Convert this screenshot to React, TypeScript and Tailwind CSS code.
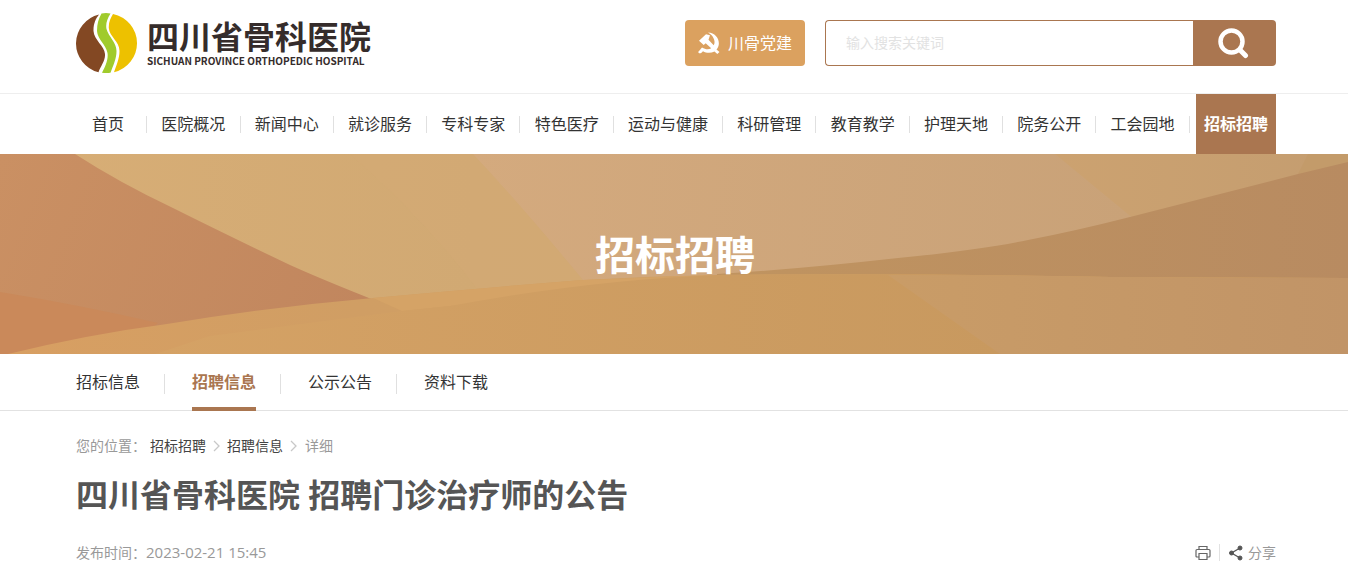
import { Fragment } from "react";

const NAV = [
  "首页", "医院概况", "新闻中心", "就诊服务", "专科专家", "特色医疗", "运动与健康",
  "科研管理", "教育教学", "护理天地", "院务公开", "工会园地", "招标招聘",
];
const TABS = ["招标信息", "招聘信息", "公示公告", "资料下载"];

function LogoMark() {
  return (
    <svg className="h-[60px] w-[61px] shrink-0" viewBox="0 0 61 60" aria-hidden="true">
      <path fill="#834823" d="M23 1.500A30.500 30 0 0 0 0 30A30.500 30 0 0 0 22.500 59.300C24.500 53 29.500 48 29 41C28.500 33 18 27 17.500 18C17.300 11 19.500 6 23 1.500Z" />
      <path fill="#a0cb2c" d="M25.500 0.400Q30 -0.300 34.500 0.400C31 6 29.500 11 30.500 16C32.500 24 40.500 29 40.500 38C40.500 46 37 53 34.500 59.700Q30.500 60.200 26 59.800C29 54 32.500 47 31.500 40C30 31.500 21.500 26.500 21 18C21 11 22.500 5.500 25.500 0.400Z" />
      <path fill="#edc100" d="M37 1A30.500 30 0 0 1 61 30A30.500 30 0 0 1 38 59.300C40 53 43.500 46 43.500 38C43.500 28 33.500 24 32.800 15C32.500 9.500 34.500 5 37 1Z" />
    </svg>
  );
}

function PartyEmblem() {
  return (
    <svg className="h-[22px] w-[22px]" viewBox="0 0 22 22" aria-hidden="true">
      <path fill="#fff" d="M10 0.500C18 0.500 22.500 8.500 20.300 14.500C19.800 15.700 19.200 16.700 18.500 17.500L21.500 20L19.300 22L16.500 19.500C12.500 21.500 8 21 5 19.200L3.500 20.700Q1.500 22 0.500 20.700Q0 19.500 1.500 18.500L4 15.500C7.500 17.600 10.800 17.700 13.200 16.300L7.700 11.200L5.700 12.900L1 8.800L8 2.300L12 3.200L10.500 7.800L15.700 13.200C18 9.500 15.500 3.500 10 0.500Z" />
    </svg>
  );
}

function BannerArt() {
  return (
    <svg className="absolute inset-0 h-full w-full" viewBox="0 0 1348 200" preserveAspectRatio="none" aria-hidden="true">
      <defs>
        <linearGradient id="sky"><stop offset="0" stopColor="#d8ae76" /><stop offset="0.350" stopColor="#d1a973" /><stop offset="0.450" stopColor="#d0a872" /></linearGradient>
        <linearGradient id="rose" gradientUnits="userSpaceOnUse" x1="470" y1="0" x2="1130" y2="60"><stop offset="0" stopColor="#d4aa7e" /><stop offset="1" stopColor="#c9a278" /></linearGradient>
        <linearGradient id="east" gradientUnits="userSpaceOnUse" x1="1055" y1="0" x2="1348" y2="0"><stop offset="0" stopColor="#cca270" /><stop offset="1" stopColor="#c49d70" /></linearGradient>
        <linearGradient id="clay" gradientUnits="userSpaceOnUse" x1="0" y1="0" x2="373" y2="144"><stop offset="0" stopColor="#ca9063" /><stop offset="1" stopColor="#c1865e" /></linearGradient>
        <linearGradient id="ridge" gradientUnits="userSpaceOnUse" x1="717" y1="0" x2="1348" y2="0"><stop offset="0" stopColor="#c09460" /><stop offset="1" stopColor="#b88b61" /></linearGradient>
        <linearGradient id="hill" gradientUnits="userSpaceOnUse" x1="0" y1="0" x2="600" y2="0"><stop offset="0" stopColor="#d89f62" /><stop offset="0.600" stopColor="#d09e64" /><stop offset="1" stopColor="#d0a064" /></linearGradient>
        <linearGradient id="sand" gradientUnits="userSpaceOnUse" x1="155" y1="0" x2="1000" y2="0"><stop offset="0" stopColor="#d5a265" /><stop offset="1" stopColor="#c8995f" /></linearGradient>
        <linearGradient id="shore" gradientUnits="userSpaceOnUse" x1="898" y1="0" x2="1348" y2="0"><stop offset="0" stopColor="#c99c67" /><stop offset="1" stopColor="#c19467" /></linearGradient>
      </defs>
      <rect width="1348" height="200" fill="url(#sky)" />
      <path fill="#d5aa76" fillOpacity="0.400" d="M350 0H473Q520 50 583 126L478 136Q420 60 350 0Z" />
      <path fill="url(#rose)" d="M473 0H1140V200H640L583 126Q520 50 473 0Z" />
      <path fill="url(#east)" d="M1055 0H1348V70H1140Z" />
      <path fill="#c39b6a" d="M1308 0H1348V30H1293Z" />
      <path fill="url(#clay)" d="M0 0H75Q120 29 173 54Q225 80 290 111Q330 129 402 157V200H0Z" />
      <path fill="#ca895a" d="M0 138Q80 151 158 169L120 200H0Z" />
      <path fill="url(#ridge)" d="M717 120Q800 115 898 104Q980 96 1028 86Q1075 77 1130 63L1298 20L1348 8V126H717Z" />
      <path fill="url(#hill)" d="M8 200Q90 180 167 170Q270 153 373 144Q480 134 583 126Q650 122 717 121Q900 119 1110 123L1348 124V200Z" />
      <path fill="#d5a366" d="M373 144Q480 134 583 126L717 121L450 152L402 157Z" />
      <path fill="url(#sand)" d="M155 200L210 182Q300 170 402 157L450 152Q590 126 717 121Q900 119 1110 123L1348 124V200Z" />
      <path fill="url(#shore)" d="M888 121Q1040 121 1110 123L1348 124V200H1000L898 128Z" />
    </svg>
  );
}

function Chevron() {
  return (
    <svg className="h-3 w-[7px]" viewBox="0 0 7 12" fill="none" stroke="#c8c8c8" strokeWidth="1.300" aria-hidden="true">
      <path d="M1 1L6 6L1 11" />
    </svg>
  );
}

export default function App() {
  return (
    <div className="bg-white font-['Open_Sans','Noto_Sans_CJK_SC',sans-serif] text-[#333]">
      <header className="border-b border-[#eee] pl-1">
        <div className="mx-auto flex h-[93px] max-w-[1200px] items-start justify-between">
          <a href="#" className="mt-[13px] flex gap-2.5" aria-label="四川省骨科医院">
            <LogoMark />
            <span className="flex flex-col whitespace-nowrap font-['Noto_Sans_CJK_SC',sans-serif] font-bold text-[#352c2b]">
              <span className="mt-1 text-[32px] leading-9">四川省骨科医院</span>
              <span className="mt-0.5 text-[10px] leading-3">SICHUAN PROVINCE ORTHOPEDIC HOSPITAL</span>
            </span>
          </a>
          <div className="mt-5 flex gap-5">
            <a href="#" className="flex h-[46px] w-[120px] items-center justify-center gap-2 rounded-[4px] bg-[#dba15f] text-base text-white">
              <PartyEmblem />
              川骨党建
            </a>
            <form className="flex h-[46px] w-[451px]" onSubmit={(e) => e.preventDefault()}>
              <input
                type="text"
                aria-label="搜索"
                placeholder="输入搜索关键词"
                className="min-w-0 flex-1 rounded-l-[4px] border border-r-0 border-[#aa7650] px-5 text-sm outline-none placeholder:text-[#e2e2e2]"
              />
              <button type="submit" aria-label="搜索" className="flex w-[83px] items-center justify-center rounded-r-[4px] bg-[#aa7650] pr-1">
                <svg className="h-8 w-8" viewBox="0 0 32 32" fill="none" stroke="#fff" aria-hidden="true">
                  <circle cx="14.500" cy="14.500" r="11" strokeWidth="4.500" />
                  <path d="M23 23L28.500 28.500" strokeWidth="5" strokeLinecap="round" />
                </svg>
              </button>
            </form>
          </div>
        </div>
      </header>

      <nav className="pl-1" aria-label="主导航">
        <div className="mx-auto flex h-[60px] max-w-[1200px] items-center justify-between">
          {NAV.map((label, i) => (
            <Fragment key={label}>
              {i > 0 && <span className="h-[17px] w-px bg-[#e0e0e0]" />}
              <a
                href="#"
                className={
                  i === NAV.length - 1
                    ? "whitespace-nowrap bg-[#aa7650] px-2 text-base font-bold leading-[60px] text-white"
                    : i === 0
                      ? "whitespace-nowrap px-4 text-base leading-[60px]"
                      : "whitespace-nowrap px-2 text-base leading-[60px]"
                }
              >
                {label}
              </a>
            </Fragment>
          ))}
        </div>
      </nav>

      <section className="relative flex h-[200px] items-center justify-center bg-[#d0a670]">
        <BannerArt />
        <h2 className="relative pl-0.5 pt-0.5 text-[40px] font-bold leading-[60px] text-white">招标招聘</h2>
      </section>

      <div className="border-b border-[#e2e2e2] pl-1">
        <div className="mx-auto flex h-14 max-w-[1200px] items-start">
          {TABS.map((label, i) => (
            <Fragment key={label}>
              {i > 0 && <span className="ml-6 mr-[27px] mt-5 h-5 w-px bg-[#e0e0e0]" />}
              <a
                href="#"
                className={
                  i === 1
                    ? "h-[57px] border-b-4 border-[#aa7650] text-base font-bold leading-[56px] text-[#aa7650]"
                    : "h-[57px] text-base leading-[56px]"
                }
              >
                {label}
              </a>
            </Fragment>
          ))}
        </div>
      </div>

      <main className="pl-1">
        <div className="mx-auto max-w-[1200px] pt-[23px]">
          <div className="flex items-center text-sm leading-6 text-[#999]">
            <span className="mr-1">您的位置：</span>
            <a href="#" className="text-[#444]">招标招聘</a>
            <span className="mx-[7px]"><Chevron /></span>
            <a href="#" className="text-[#444]">招聘信息</a>
            <span className="ml-[7px] mr-2"><Chevron /></span>
            <span>详细</span>
          </div>
          <h1 className="mt-3 text-[32px] font-bold leading-[50px] text-[#555]">四川省骨科医院 招聘门诊治疗师的公告</h1>
          <div className="mt-5 flex items-center justify-between pb-2.5 text-sm leading-6 text-[#999]">
            <p>发布时间：<time className="text-[15px]">2023-02-21 15:45</time></p>
            <div className="flex items-center">
              <button type="button" aria-label="打印">
                <svg className="h-4 w-4" viewBox="0 0 16 16" fill="none" stroke="#666" strokeWidth="1.200" aria-hidden="true">
                  <path d="M4 4.500V1.500H12V4.500M4 12H2Q1 12 1 11V5.500Q1 4.500 2 4.500H14Q15 4.500 15 5.500V11Q15 12 14 12H12M4 8.500H12V14.500H4Z" />
                </svg>
              </button>
              <span className="mx-2 h-[17px] w-px bg-[#e2e2e2]" />
              <button type="button" className="flex items-center gap-1">
                <svg className="h-4 w-4" viewBox="0 0 16 16" fill="#555" stroke="#555" aria-hidden="true">
                  <path fill="none" strokeWidth="1.300" d="M12 3L3.500 8L12 13" />
                  <circle cx="12" cy="3" r="2" /><circle cx="3.500" cy="8" r="2" /><circle cx="12" cy="13" r="2" />
                </svg>
                分享
              </button>
            </div>
          </div>
        </div>
      </main>
    </div>
  );
}
